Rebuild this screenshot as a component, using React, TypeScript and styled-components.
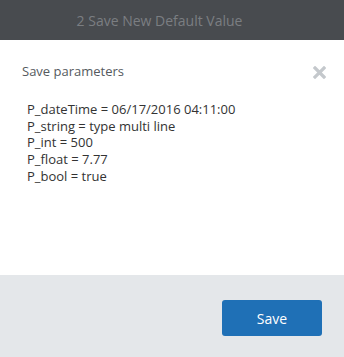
import React from "react";
import styled, { createGlobalStyle } from "styled-components";

const Global = createGlobalStyle`
  html, body { margin: 0; padding: 0; }
  body { font-family: "Open Sans", "Noto Sans", sans-serif; background: #ffffff; }
`;

const Page = styled.div`
  width: 344px;
  height: 357px;
  display: flex;
  flex-direction: column;
  overflow: hidden;
`;

const TopBar = styled.div`
  height: 40px;
  flex: 0 0 40px;
  background: #484b4f;
  color: #7b7e82;
  font-size: 14px;
  display: flex;
  align-items: center;
  justify-content: center;
  padding-right: 25px;
  box-sizing: border-box;
`;

const Body = styled.div`
  flex: 1;
  background: #ffffff;
  padding: 22px 18px 0 22px;
  box-sizing: border-box;
`;

const TitleRow = styled.div`
  display: flex;
  justify-content: space-between;
  align-items: flex-start;
`;

const Title = styled.div`
  font-size: 13px;
  color: #555a5e;
  line-height: 18px;
`;

const Close = styled.button`
  border: none;
  background: transparent;
  padding: 0;
  margin-top: 4px;
  width: 13px;
  height: 13px;
  cursor: pointer;
  display: flex;
`;

const Params = styled.div`
  margin-top: 21px;
  padding-left: 5px;
  font-size: 13px;
  line-height: 16.67px;
  color: #333;
`;

const Footer = styled.div`
  flex: 0 0 82px;
  background: #e4e7ea;
  display: flex;
  justify-content: flex-end;
  align-items: flex-start;
  padding: 25px 22px 0 0;
  box-sizing: border-box;
`;

const SaveButton = styled.button`
  width: 100px;
  height: 36px;
  background: #1f70b6;
  color: #ffffff;
  border: none;
  border-radius: 3px;
  font-family: "Open Sans", "Noto Sans", sans-serif;
  font-size: 14px;
  cursor: pointer;
`;

const params = [
  "P_dateTime = 06/17/2016 04:11:00",
  "P_string = type multi line",
  "P_int = 500",
  "P_float = 7.77",
  "P_bool = true",
];

export default function App() {
  return (
    <Page>
      <Global />
      <TopBar>2 Save New Default Value</TopBar>
      <Body>
        <TitleRow>
          <Title>Save parameters</Title>
          <Close aria-label="close">
            <svg width="13" height="13" viewBox="0 0 13 13">
              <path d="M2 2 L11 11 M11 2 L2 11" stroke="#c4c8cc" strokeWidth="3.2" strokeLinecap="square" />
            </svg>
          </Close>
        </TitleRow>
        <Params>
          {params.map((p) => (
            <div key={p}>{p}</div>
          ))}
        </Params>
      </Body>
      <Footer>
        <SaveButton>Save</SaveButton>
      </Footer>
    </Page>
  );
}
